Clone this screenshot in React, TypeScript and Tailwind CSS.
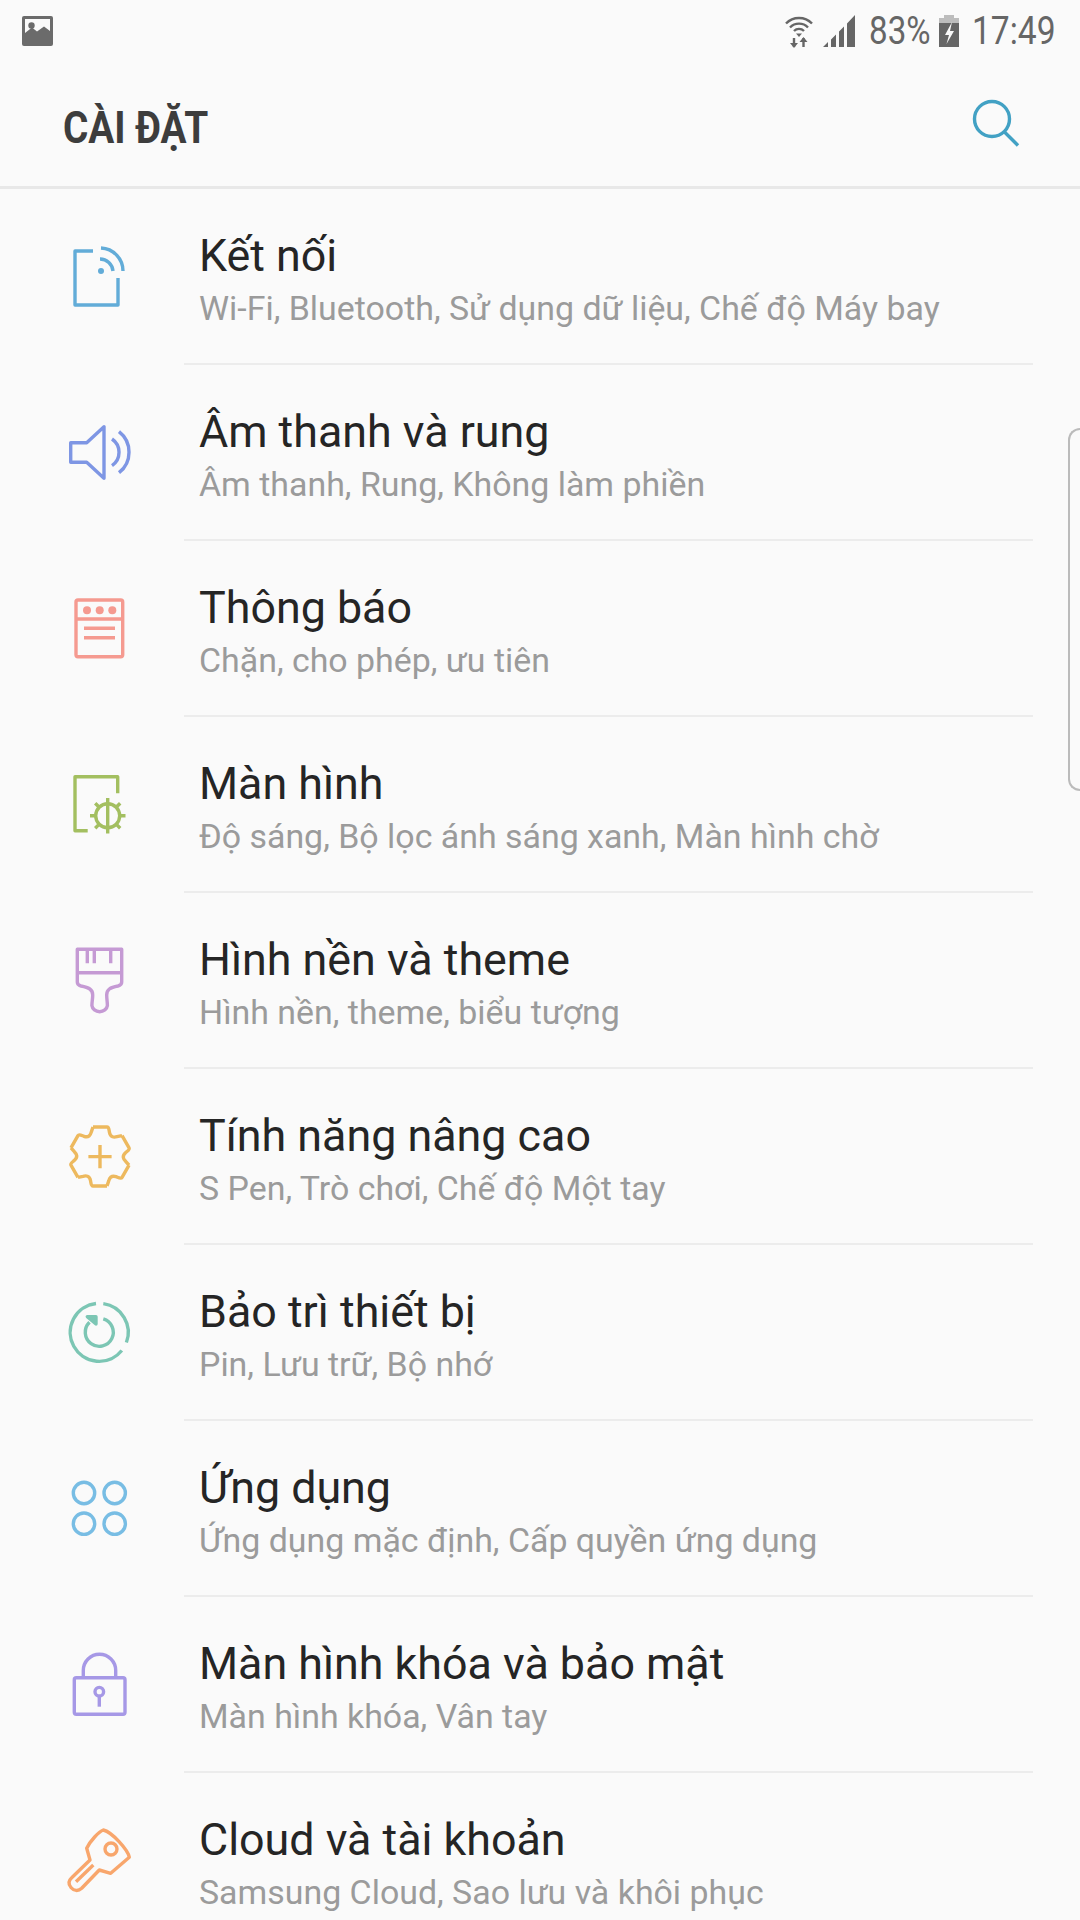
const rows = [
  { title: 'Kết nối', sub: 'Wi-Fi, Bluetooth, Sử dụng dữ liệu, Chế độ Máy bay', icon: <ConnectionsIcon /> },
  { title: 'Âm thanh và rung', sub: 'Âm thanh, Rung, Không làm phiền', icon: <SoundIcon /> },
  { title: 'Thông báo', sub: 'Chặn, cho phép, ưu tiên', icon: <NotificationIcon /> },
  { title: 'Màn hình', sub: 'Độ sáng, Bộ lọc ánh sáng xanh, Màn hình chờ', icon: <DisplayIcon /> },
  { title: 'Hình nền và theme', sub: 'Hình nền, theme, biểu tượng', icon: <BrushIcon /> },
  { title: 'Tính năng nâng cao', sub: 'S Pen, Trò chơi, Chế độ Một tay', icon: <GearPlusIcon /> },
  { title: 'Bảo trì thiết bị', sub: 'Pin, Lưu trữ, Bộ nhớ', icon: <MaintenanceIcon /> },
  { title: 'Ứng dụng', sub: 'Ứng dụng mặc định, Cấp quyền ứng dụng', icon: <AppsIcon /> },
  { title: 'Màn hình khóa và bảo mật', sub: 'Màn hình khóa, Vân tay', icon: <LockIcon /> },
  { title: 'Cloud và tài khoản', sub: 'Samsung Cloud, Sao lưu và khôi phục', icon: <KeyIcon /> },
];

function IconBox({ color, children }: { color: string; children: React.ReactNode }) {
  return (
    <svg width="80" height="80" viewBox="0 0 80 80" fill="none" stroke={color} strokeWidth="3.4" strokeLinecap="butt" strokeLinejoin="round" className="shrink-0">
      {children}
    </svg>
  );
}

function ConnectionsIcon() {
  return (
    <IconBox color="#62acd8">
      <path d="M33 14H15V68H58V41" />
      <circle cx="41" cy="34" r="3" fill="#62acd8" stroke="none" />
      <path d="M40 22A13 13 0 0 1 53 34" />
      <path d="M41 11A23 23 0 0 1 63 34" />
    </IconBox>
  );
}

function SoundIcon() {
  return (
    <IconBox color="#7e96e4">
      <path d="M10.7 29.7H26.7L44 13.7V65.3L26.7 49.3H10.7Z" />
      <path d="M52 26A16.2 16.2 0 0 1 52 52.7" />
      <path d="M59 18.7A26 26 0 0 1 59 59.7" />
    </IconBox>
  );
}

function NotificationIcon() {
  return (
    <IconBox color="#f59a90">
      <rect x="16" y="11" width="46.7" height="56.7" rx="2" />
      <path d="M16 30H62.7M24 39.3H55M24 48.7H55" />
      <g fill="#f59a90" stroke="none">
        <circle cx="27" cy="21.3" r="4" />
        <circle cx="39.7" cy="21.3" r="4" />
        <circle cx="52.3" cy="21.3" r="4" />
      </g>
    </IconBox>
  );
}

function DisplayIcon() {
  return (
    <IconBox color="#a3bf60">
      <path d="M27.7 65.7H15V11.7H57.7V28.3" />
      <circle cx="47.7" cy="50.7" r="12" />
      <path d="M47.7 33V68.4M30 50.7H35.7M59.7 50.7H65.5M35.2 38.2L39 42M60.2 38.2L56.4 42M35.2 63.2L39 59.4M60.2 63.2L56.4 59.4" />
    </IconBox>
  );
}

function BrushIcon() {
  return (
    <IconBox color="#c59ad4">
      <path d="M17.3 8.3H61.7V41Q61.7 44 58 45C50 46.5 46.7 48.5 46.7 54C46.7 58 47.4 61 47.4 64.5A7.8 7 0 0 1 31.9 64.5C31.9 61 32.7 58 32.7 54C32.7 48.5 29 46.5 21 45Q17.3 44 17.3 41Z" />
      <path d="M17.3 31.7H61.7M27.3 8.3V22.3M34.3 8.3V22.3M50.7 8.3V22.3" />
    </IconBox>
  );
}

function GearPlusIcon() {
  return (
    <IconBox color="#edb95e">
      {[0, 60, 120, 180, 240, 300].map((deg) => (
        <path key={deg} transform={`rotate(${deg} 40 39.5)`} d="M33 10H47C49 10 49 13 49.5 15.5C50.5 20.5 54 20.5 57 19.7L62 18.7" />
      ))}
      <path d="M40 28V51.2M28.4 39.6H51.6" />
    </IconBox>
  );
}

function MaintenanceIcon() {
  return (
    <IconBox color="#7cc6b4">
      <path d="M43.3 10.6A29 29 0 0 1 66.4 49.5" />
      <path d="M61.8 57.5A29 29 0 1 1 36 10.5" />
      <path d="M43.3 25.9A14 14 0 1 1 29.5 29.3" />
      <path d="M27.3 23.7H36V31Z" fill="#7cc6b4" />
    </IconBox>
  );
}

function AppsIcon() {
  return (
    <IconBox color="#78bde4">
      <circle cx="24" cy="24" r="10.7" />
      <circle cx="54.7" cy="24" r="10.7" />
      <circle cx="24" cy="54.7" r="10.7" />
      <circle cx="54.7" cy="54.7" r="10.7" />
    </IconBox>
  );
}

function LockIcon() {
  return (
    <IconBox color="#a698e6">
      <rect x="14.3" y="32.7" width="50.7" height="36.6" rx="2" />
      <path d="M23.3 32.7V25.5A16.2 16.2 0 0 1 55.7 25.5V32.7" />
      <circle cx="39.3" cy="46.7" r="4.3" />
      <path d="M39.3 51V61.7" />
    </IconBox>
  );
}

function KeyIcon() {
  return (
    <IconBox color="#f8a66c">
      <path d="M43.3 9C39 10.5 30 20 26.7 27.3L30 39L11.7 56.7C8 60 8.5 63.5 11 66.5C14 70 18 70.5 21.7 67.3L39.3 49L50.7 52.3L69.3 36.3C68 29 52 11 43.3 9Z" />
      <circle cx="51" cy="28" r="6" />
      <path d="M33.3 44L16 60.7" />
    </IconBox>
  );
}

function StatusBar() {
  return (
    <div className="relative flex h-[60px] items-center justify-between pl-[22px] pr-[25px] pt-[2px]">
      {/* picture notification */}
      <svg width="31" height="30" viewBox="0 0 31 30">
        <rect width="31" height="30" rx="2" fill="#6b6b6b" />
        <path d="M3 3H28V15L22 10.5L15 15.5L10 11.5L3 17Z" fill="#fafafa" />
        <circle cx="9.5" cy="9.5" r="3.2" fill="#6b6b6b" />
      </svg>
      <div className="flex items-center text-[#666666]">
        <svg width="28" height="33" viewBox="0 0 28 33" fill="none" stroke="#666666" strokeWidth="2.4" className="mr-[10px]">
          <path d="M1 8.5A18 18 0 0 1 27 8.5" />
          <path d="M5 12.5A12.5 12.5 0 0 1 23 12.5" />
          <path d="M9 16A7 7 0 0 1 19 16" />
          <path d="M11 18.5L14 22L17 18.5Z" fill="#666666" stroke="none" />
          <path d="M9 23V32M18.5 23V32" />
          <path d="M5 28H13L9 33ZM14.5 27H22.5L18.5 22Z" fill="#666666" stroke="none" />
        </svg>
        <svg width="32" height="32" viewBox="0 0 32 32" className="mr-[14px]">
          <path d="M0 32L5 27V32ZM8 24.5L13 19.5V32H8ZM16 16.5L21 11.5V32H16ZM24 8.5L32 0V32H24Z" fill="#666666" />
        </svg>
        <span className="w-[61px] origin-left scale-x-[0.85] whitespace-nowrap font-['Roboto',sans-serif] text-[39px] leading-none">83%</span>
        <svg width="20" height="32" viewBox="0 0 20 32" className="ml-[9px] mr-[13px]">
          <path d="M5 0H15V3H20V32H0V3H5Z" fill="#bdbdbd" />
          <path d="M0 8H20V32H0Z" fill="#666666" />
          <path d="M13 7L6 20H10L7.5 29L15 16H11Z" fill="#fafafa" />
        </svg>
        <span className="w-[83px] origin-left scale-x-[0.86] whitespace-nowrap font-['Roboto',sans-serif] text-[39px] leading-none">17:49</span>
      </div>
    </div>
  );
}

export default function App() {
  return (
    <div className="relative h-[1920px] w-[1080px] overflow-hidden bg-[#fafafa] font-['Roboto',sans-serif]">
      <StatusBar />
      <header className="flex h-[129px] items-center justify-between border-b-[3px] border-[#e8e8e8] pl-[63px] pr-[60px] pt-[8px]">
        <h1 className="origin-left scale-x-[0.86] whitespace-nowrap text-[45px] font-bold leading-none text-[#3d3d3d]">CÀI ĐẶT</h1>
        <svg width="48" height="48" viewBox="0 0 48 48" fill="none" stroke="#42a1c4" strokeWidth="3.4" className="-mt-[8px]">
          <circle cx="20" cy="20" r="17.5" />
          <path d="M32 32.5L46 46.5" />
        </svg>
      </header>
      <ul>
        {rows.map((row) => (
          <li key={row.title} className="flex h-[176px] pl-[60px] pr-[47px] pt-[48px]">
            <div className="shrink-0">{row.icon}</div>
            <div className="-mt-[48px] ml-[44px] flex flex-1 flex-col border-b-2 border-[#ececec] pl-[15px] pt-[40px]">
              <div className="whitespace-nowrap text-[44.8px] leading-[54px] text-[#252525]">{row.title}</div>
              <div className="mt-[4px] whitespace-nowrap text-[33.9px] leading-[44px] text-[#9b9b9b]">{row.sub}</div>
            </div>
          </li>
        ))}
      </ul>
      {/* edge panel handle */}
      <div className="absolute right-0 top-[428px] h-[363px] w-[12px] rounded-l-[16px] border-y-2 border-l-2 border-[#bbbbbb]" />
    </div>
  );
}
